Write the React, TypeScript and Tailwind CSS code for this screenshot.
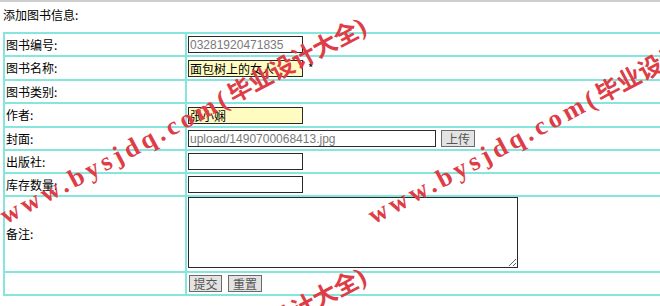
import React from 'react'

const cjk = "font-['SimSun','Noto_Sans_CJK_SC',sans-serif]"

interface RowProps {
  label: string
  h: string
  align?: string
  children?: React.ReactNode
}

const Row: React.FC<RowProps> = ({ label, h, align = 'items-center', children }) => (
  <div className={`flex ${h} border-b-2 border-[#86e6de] box-border`}>
    <div className="w-[182px] flex items-center pl-[1px] border-r-2 border-[#86e6de] text-[12px] text-black">
      {label}
    </div>
    <div className={`flex-1 flex ${align} pl-[1px]`}>{children}</div>
  </div>
)

const inputBase =
  "h-[17px] border border-[#2a2a2a] px-[1px] text-[12px] leading-[15px] outline-none font-['Liberation_Sans','Noto_Sans_CJK_SC',sans-serif]"

const btn =
  "h-[17px] border border-[#6a6a6a] bg-[#e3e3e3] text-[12px] leading-[15px] text-[#555] flex items-center justify-center"

// 水印：一行斜着的红字
const Watermark: React.FC<{ left: number; top: number }> = ({ left, top }) => (
  <span
    className="absolute origin-bottom-left -rotate-[28deg] whitespace-nowrap leading-none font-bold text-[#de3c46] pointer-events-none"
    style={{ left, top }}
  >
    <span className="text-[26px] tracking-[4px] font-['Liberation_Serif',serif]">www.bysjdq.com(</span>
    <span className="text-[24px] font-['Noto_Sans_CJK_SC',sans-serif]">毕业设计大全</span>
    <span className="text-[26px] font-['Liberation_Serif',serif]">)</span>
  </span>
)

export default function App() {
  return (
    <div className={`relative w-[660px] h-[306px] overflow-hidden bg-white border-t-2 border-[#cfcfcf] ${cjk}`}>
      {/* 标题 */}
      <div className="h-[30px] pl-[3px] pt-[4px] text-[12px] text-black">添加图书信息:</div>

      {/* 表单表格 */}
      <div className="ml-[3px] w-[720px] border-l-2 border-t-2 border-[#86e6de]">
        <Row label="图书编号:" h="h-[23px]">
          <input readOnly defaultValue="03281920471835" className={`${inputBase} w-[115px] text-[#7a7a7a] bg-white`} />
        </Row>
        <Row label="图书名称:" h="h-[24px]">
          <input readOnly defaultValue="面包树上的女人" className={`${inputBase} w-[115px] text-black bg-[#fffcc2] ${cjk}`} />
          <span className="ml-[5px] text-[12px]">*</span>
        </Row>
        <Row label="图书类别:" h="h-[23px]" />
        <Row label="作者:" h="h-[24px]">
          <input readOnly defaultValue="张小娴" className={`${inputBase} w-[115px] text-black bg-[#fffcc2] ${cjk}`} />
        </Row>
        <Row label="封面:" h="h-[23px]">
          <input readOnly defaultValue="upload/1490700068413.jpg" className={`${inputBase} w-[248px] text-[#7a7a7a] bg-white`} />
          <div className={`${btn} ml-[5px] w-[34px]`}>上传</div>
        </Row>
        <Row label="出版社:" h="h-[23px]">
          <input readOnly className={`${inputBase} w-[115px] bg-white`} />
        </Row>
        <Row label="库存数量:" h="h-[23px]">
          <input readOnly className={`${inputBase} w-[115px] bg-white`} />
        </Row>
        <Row label="备注:" h="h-[76px]" align="items-start">
          <textarea readOnly className="w-[330px] h-[71px] border border-[#2a2a2a] outline-none resize" />
        </Row>
        <Row label="" h="h-[23px]">
          <div className={`${btn} ml-[1px] w-[33px]`}>提交</div>
          <div className={`${btn} ml-[6px] w-[34px]`}>重置</div>
        </Row>
      </div>

      <Watermark left={8} top={200} />
      <Watermark left={376} top={200} />
      <Watermark left={8} top={450} />
    </div>
  )
}
